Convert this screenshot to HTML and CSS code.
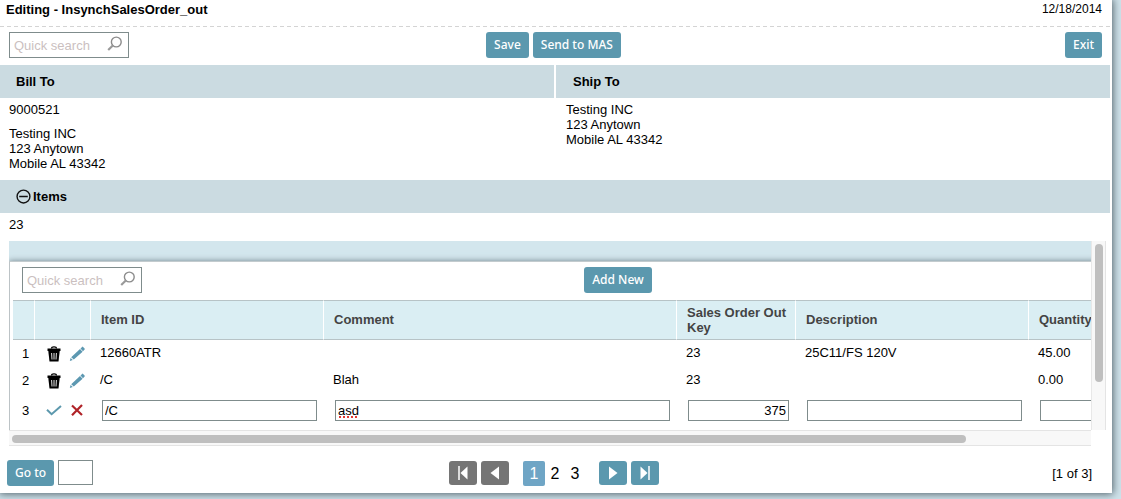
FILE: index.html
```html
<!DOCTYPE html>
<html lang="en">
<head>
<meta charset="utf-8">
<title>Editing - InsynchSalesOrder_out</title>
<link rel="stylesheet" href="styles.css">
</head>
<body>
<svg class="defs" aria-hidden="true">
  <symbol id="search" viewBox="0 0 16 16"><circle cx="9.3" cy="6" r="4.9" fill="none" stroke="#8c8c8c" stroke-width="1.4"/><path d="M5.8 9.5L1.2 14" stroke="#9a9a9a" stroke-width="2.2" fill="none"/></symbol>
  <symbol id="trash" viewBox="0 0 14 16"><path d="M4.5 2.5C4.5 .3 9.5 .3 9.5 2.5" fill="none" stroke="#000" stroke-width="1.2"/><path d="M.5 2.5h13v2.500H.5z"/><path d="M1.300 5h11.400L11.500 15.500h-9z"/><path d="M4.600 7l.4 6.500M7 7v6.500M9.400 7l-.4 6.500" stroke="#fff" stroke-width=".9"/></symbol>
  <symbol id="pencil" viewBox="0 0 16 16"><path d="M.8 15l.8-3 2.200 2zM2.200 11.300L11 3l2.600 2.800-8.800 7.800zM11.500 2.600L13.600.6 16 3 14 5.300z" fill="#5c98b1"/></symbol>
  <symbol id="check" viewBox="0 0 16 16"><path d="M1 7.800l4.600 4.400L15 4" fill="none" stroke="#5c98ad" stroke-width="2"/></symbol>
  <symbol id="cross" viewBox="0 0 16 16"><path d="M3 3.500l10 9.500M13 3L3 13.300" fill="none" stroke="#b02328" stroke-width="2.200"/></symbol>
  <symbol id="prev" viewBox="0 0 16 16"><path d="M12 1.500v13L3.500 8z" fill="#fff"/></symbol>
  <symbol id="first" viewBox="0 0 16 16"><path d="M12.500 1.500v13L5.500 8z" fill="#fff"/><path d="M4 1v14" stroke="#fff" stroke-width="1.500"/></symbol>
</svg>
<main class="dialog">
  <header class="title-bar">
    <h1 class="title">Editing - InsynchSalesOrder_out</h1>
    <time class="date" datetime="2014-12-18">12/18/2014</time>
  </header>
  <div class="toolbar">
    <label class="search"><input class="search-input" type="text" placeholder="Quick search" aria-label="Quick search"><svg class="icon"><use href="#search"/></svg></label>
    <div class="actions">
      <button class="button" type="button">Save</button>
      <button class="button" type="button">Send to MAS</button>
    </div>
    <button class="button end" type="button">Exit</button>
  </div>
  <div class="parties">
    <section>
      <h2 class="band">Bill To</h2>
      <div class="party">
        <p>9000521</p>
        <p>Testing INC<br>123 Anytown<br>Mobile AL 43342</p>
      </div>
    </section>
    <section>
      <h2 class="band">Ship To</h2>
      <div class="party">
        <p>Testing INC<br>123 Anytown<br>Mobile AL 43342</p>
      </div>
    </section>
  </div>
  <section class="items">
    <h2 class="band">
      <button class="toggle" type="button" aria-label="Collapse items"><svg class="toggle-icon" viewBox="0 0 14 14"><circle cx="7" cy="7" r="6" fill="none" stroke="#111" stroke-width="1.3"/><path d="M3 7h8" stroke="#111" stroke-width="1.4"/></svg></button>
      Items
    </h2>
    <p class="key">23</p>
    <div class="scroller">
      <div class="viewport">
        <div class="strip"></div>
        <div class="grid-panel">
          <div class="toolbar inner">
            <label class="search"><input class="search-input" type="text" placeholder="Quick search" aria-label="Quick search items"><svg class="icon"><use href="#search"/></svg></label>
            <div class="actions"><button class="button" type="button">Add New</button></div>
          </div>
          <table class="grid">
            <colgroup><col class="c-num"><col class="c-tools"><col class="c-text"><col class="c-comment"><col class="c-key"><col class="c-text"><col class="c-qty"></colgroup>
            <thead>
              <tr><th></th><th></th><th>Item ID</th><th>Comment</th><th>Sales Order Out Key</th><th>Description</th><th>Quantity</th></tr>
            </thead>
            <tbody>
              <tr>
                <td class="num">1</td>
                <td class="tool-cell"><div class="tools"><button class="tool" type="button" aria-label="Delete"><svg class="icon"><use href="#trash"/></svg></button><button class="tool" type="button" aria-label="Edit"><svg class="icon"><use href="#pencil"/></svg></button></div></td>
                <td>12660ATR</td><td></td><td>23</td><td>25C11/FS 120V</td><td>45.00</td>
              </tr>
              <tr>
                <td class="num">2</td>
                <td class="tool-cell"><div class="tools"><button class="tool" type="button" aria-label="Delete"><svg class="icon"><use href="#trash"/></svg></button><button class="tool" type="button" aria-label="Edit"><svg class="icon"><use href="#pencil"/></svg></button></div></td>
                <td>/C</td><td>Blah</td><td>23</td><td></td><td>0.00</td>
              </tr>
              <tr class="editing">
                <td class="num">3</td>
                <td class="tool-cell"><div class="tools"><button class="tool" type="button" aria-label="Accept"><svg class="icon"><use href="#check"/></svg></button><button class="tool" type="button" aria-label="Cancel"><svg class="icon"><use href="#cross"/></svg></button></div></td>
                <td><input class="field" type="text" value="/C" aria-label="Item ID"></td>
                <td><input class="field misspelt" type="text" value="asd" aria-label="Comment"></td>
                <td><input class="field number" type="text" value="375" aria-label="Sales Order Out Key"></td>
                <td><input class="field" type="text" aria-label="Description"></td>
                <td><input class="field" type="text" aria-label="Quantity"></td>
              </tr>
            </tbody>
          </table>
        </div>
      </div>
      <div class="track vertical"><div class="thumb"></div></div>
      <div class="track horizontal"><div class="thumb"></div></div>
    </div>
  </section>
  <footer class="footer">
    <form class="goto">
      <button class="button" type="button">Go to</button>
      <input class="goto-input" type="text" aria-label="Page number">
    </form>
    <nav class="pager" aria-label="Pages">
      <button class="step off" type="button" aria-label="First page"><svg class="icon"><use href="#first"/></svg></button>
      <button class="step off" type="button" aria-label="Previous page"><svg class="icon"><use href="#prev"/></svg></button>
      <div class="pages">
        <a class="page current" href="#1" aria-current="page">1</a>
        <a class="page" href="#2">2</a>
        <a class="page" href="#3">3</a>
      </div>
      <button class="step" type="button" aria-label="Next page"><svg class="icon flip"><use href="#prev"/></svg></button>
      <button class="step" type="button" aria-label="Last page"><svg class="icon flip"><use href="#first"/></svg></button>
    </nav>
    <span class="range">[1 of 3]</span>
  </footer>
</main>
</body>
</html>
```

FILE: styles.css
```css
* { box-sizing: border-box; }

html { overflow: hidden; background: #cfe2ea; }

body {
  min-height: 100vh;
  margin: 0;
  color: #000;
  font: 13px/15px "Liberation Sans", Arial, sans-serif;
}

h1, h2, p { margin: 0; font-size: inherit; }
button, input { font: inherit; color: inherit; }
.defs { display: none; }
.icon { display: block; width: 16px; height: 16px; }
.flip { transform: scaleX(-1); }

.dialog {
  margin-right: 9px;
  padding-bottom: 7px;
  background: #fff;
  box-shadow: 0 0 8px 1px #4f6068;
}

.title-bar {
  display: flex;
  justify-content: space-between;
  height: 27px;
  padding: 2px 10px 0 6px;
  background: repeating-linear-gradient(90deg, #d4d4d4 0 4px, transparent 4px 7px) bottom / 100% 1px no-repeat;
}
.date { font-size: 12px; }

.toolbar {
  display: grid;
  grid-template-columns: 1fr auto 1fr;
  align-items: center;
  padding: 5px 10px 7px 9px;
}
.inner { width: 1204px; margin-left: -3px; padding: 5px 0 7px 12px; }
.actions { display: flex; gap: 4px; margin-right: 4px; }
.inner .actions { margin-right: 0; }
.end { justify-self: end; }

.search {
  display: flex;
  width: 120px;
  height: 26px;
  padding: 3px 5px 0 4px;
  border: 1px solid #7f8c8c;
  background: #fff;
}
.search-input {
  flex: 1;
  min-width: 0;
  height: 18px;
  padding: 0;
  border: 0;
  outline: 0;
  background: none;
}
.search-input::placeholder { color: #cbbfbf; opacity: 1; }

.button {
  height: 26px;
  padding: 0 8px;
  border: 0;
  border-radius: 3px;
  background: #5b98ae;
  color: #fff;
  font: 500 12px/26px "Noto Sans", "Open Sans", sans-serif;
}

.band {
  display: flex;
  align-items: center;
  gap: 2px;
  height: 33px;
  padding-left: 16px;
  background: #cbdbe1;
  font-weight: bold;
}
.parties {
  display: grid;
  grid-template-columns: 1fr 1fr;
  gap: 2px;
  margin-right: 2px;
}
.party { padding: 4px 9px 9px; }
.party p + p { margin-top: 9px; }
.parties section + section .party { padding-left: 10px; }
.parties section + section .band { padding-left: 17px; }

.items .band { margin-right: 2px; }
.toggle { padding: 0; border: 0; background: none; }
.toggle-icon { display: block; width: 15px; height: 15px; }
.key { padding: 4px 9px 9px; }

.scroller {
  display: grid;
  grid-template-columns: minmax(0, 1fr) 15px;
  margin: 0 6px 0 9px;
}
.viewport { overflow: hidden; }
.strip { height: 20px; background: #d3e6ed; }
.grid-panel {
  width: 1250px;
  padding-left: 3px;
  border-left: 1px solid #bcc3c6;
  border-top: 1px solid #c3cbce;
  background: #fff;
  box-shadow: 0 0 6px #71838b;
}

.grid { width: 1216px; table-layout: fixed; border-collapse: separate; border-spacing: 0; }
.c-num { width: 22px; }
.c-tools { width: 56px; }
.c-text { width: 233px; }
.c-comment { width: 353px; }
.c-key { width: 119px; }
.c-qty { width: 200px; }
.grid th {
  height: 40px;
  padding: 0 8px 1px 10px;
  border-right: 1px solid #fff;
  border-top: 1px solid #b7c3c6;
  border-bottom: 1px solid #b7c3c6;
  background: #daeef3;
  color: #444;
  text-align: left;
}
.grid td { height: 27px; padding: 0 6px 2px 9px; }
.grid .num { padding-bottom: 0; }
.grid .tool-cell { padding: 1px 0 0 11px; }
.grid .editing td { height: 36px; padding: 0 7px 3px 11px; }
.grid .editing .num { padding-left: 9px; }
.grid .editing .tool-cell { padding: 0 0 4px 11px; }
.tools { display: flex; gap: 7px; }
.tool { padding: 0; border: 0; background: none; }

.field {
  display: block;
  width: 100%;
  height: 21px;
  padding: 2px;
  border: 1px solid #7f8c8c;
  border-radius: 0;
  outline: 0;
  background: #fff;
}
.number { text-align: right; }
.misspelt { background: repeating-linear-gradient(90deg, #e33a32 0 2px, #fff 2px 4px) 3px 15px / 20px 2px no-repeat #fff; }

.track { background: #f8f8f8; }
.vertical { padding: 3px; border-left: 1px solid #e8e8e8; border-right: 1px solid #e4e4e4; }
.vertical .thumb { width: 8px; height: 138px; }
.horizontal { height: 16px; padding: 4px 125px 4px 3px; border-top: 1px solid #e4e4e4; border-bottom: 1px solid #e4e4e4; }
.horizontal .thumb { height: 8px; }
.thumb { border-radius: 4px; background: #bfbfbf; }

.footer {
  display: grid;
  grid-template-columns: 1fr auto 1fr;
  align-items: center;
  padding: 14px 11px 0 7px;
}
.goto { display: flex; gap: 4px; }
.goto-input { width: 35px; height: 25px; border: 1px solid #7f8c8c; background: #fff; }
.pager { display: flex; align-items: center; gap: 4px; }
.step {
  display: grid;
  place-items: center;
  width: 28px;
  height: 24px;
  padding: 0;
  border: 0;
  border-radius: 3px;
  background: #5b98ae;
}
.off { background: #757575; }
.pages { display: flex; margin: 0 10px; font-size: 16px; }
.page { width: 20px; line-height: 25px; text-align: center; color: inherit; text-decoration: none; }
.current { width: 22px; border-radius: 2px; background: #6fa5c5; color: #fff; }
.range { justify-self: end; margin-right: 9px; }
```
